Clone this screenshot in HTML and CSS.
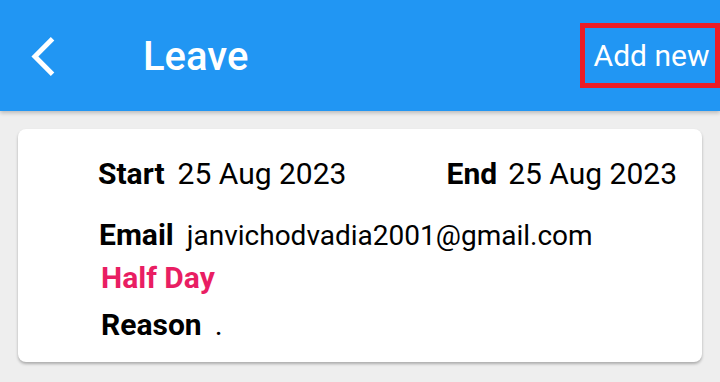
FILE: index.html
```html
<!DOCTYPE html>
<html>
<head>
<meta charset="utf-8">
<link rel="stylesheet" href="styles.css">
</head>
<body>
<header class="appbar">
  <svg class="back" viewBox="0 0 24 24" width="47" height="47"><path d="M17.51 3.87L15.73 2.1 5.84 12l9.9 9.9 1.77-1.77L9.38 12l8.13-8.13z" fill="#fff"/></svg>
  <h1 class="title">Leave</h1>
  <div class="add">Add new</div>
</header>
<main class="content">
  <section class="card">
    <div class="dates">
      <div class="pair"><span class="label">Start</span><span class="value">25 Aug 2023</span></div>
      <div class="pair end"><span class="label">End</span><span class="value">25 Aug 2023</span></div>
    </div>
    <div class="pair row email"><span class="label">Email</span><span class="value small">janvichodvadia2001@gmail.com</span></div>
    <div class="row half">Half Day</div>
    <div class="pair row reason"><span class="label">Reason</span><span class="value">.</span></div>
  </section>
</main>
</body>
</html>
```
FILE: styles.css
```css
html, body {
  margin: 0;
  padding: 0;
}
body {
  width: 720px;
  height: 382px;
  overflow: hidden;
  background: #eeeeee;
  font-family: Roboto, "Liberation Sans", sans-serif;
  color: #000;
}
.appbar {
  height: 111px;
  background: #2196f3;
  display: flex;
  align-items: center;
  position: relative;
  box-shadow: 0 2px 4px rgba(0,0,0,0.22);
}
.back {
  margin-left: 20px;
  margin-top: 1px;
  flex: none;
}
.title {
  margin: 2px 0 0 76px;
  font-size: 40px;
  font-weight: 500;
  color: #fff;
  line-height: 48px;
  flex: 1;
}
.add {
  box-sizing: border-box;
  width: 140px;
  height: 65px;
  margin-top: -1px;
  border: 5px solid #ec1c24;
  color: #fff;
  font-size: 30px;
  display: flex;
  align-items: center;
  justify-content: center;
  padding-left: 3px;
}
.content {
  padding: 18px 18px 0 18px;
}
.card {
  background: #fff;
  border-radius: 8px;
  box-shadow: 0 2px 3px rgba(0,0,0,0.28);
  padding: 29px 25px 0 80px;
  height: 233px;
  box-sizing: border-box;
}
.dates {
  display: flex;
  justify-content: space-between;
}
.pair {
  display: flex;
  align-items: baseline;
  gap: 13px;
  font-size: 30px;
  line-height: 32px;
}
.end {
  gap: 11px;
}
.label {
  font-weight: 700;
}
.small {
  font-size: 28px;
}
.row {
  font-size: 30px;
  line-height: 32px;
}
.email {
  margin-left: 1px;
  margin-top: 29px;
}
.half {
  margin-left: 3px;
  margin-top: 10px;
  color: #e91e63;
  font-weight: 700;
}
.reason {
  margin-left: 3px;
  margin-top: 15px;
}
```
